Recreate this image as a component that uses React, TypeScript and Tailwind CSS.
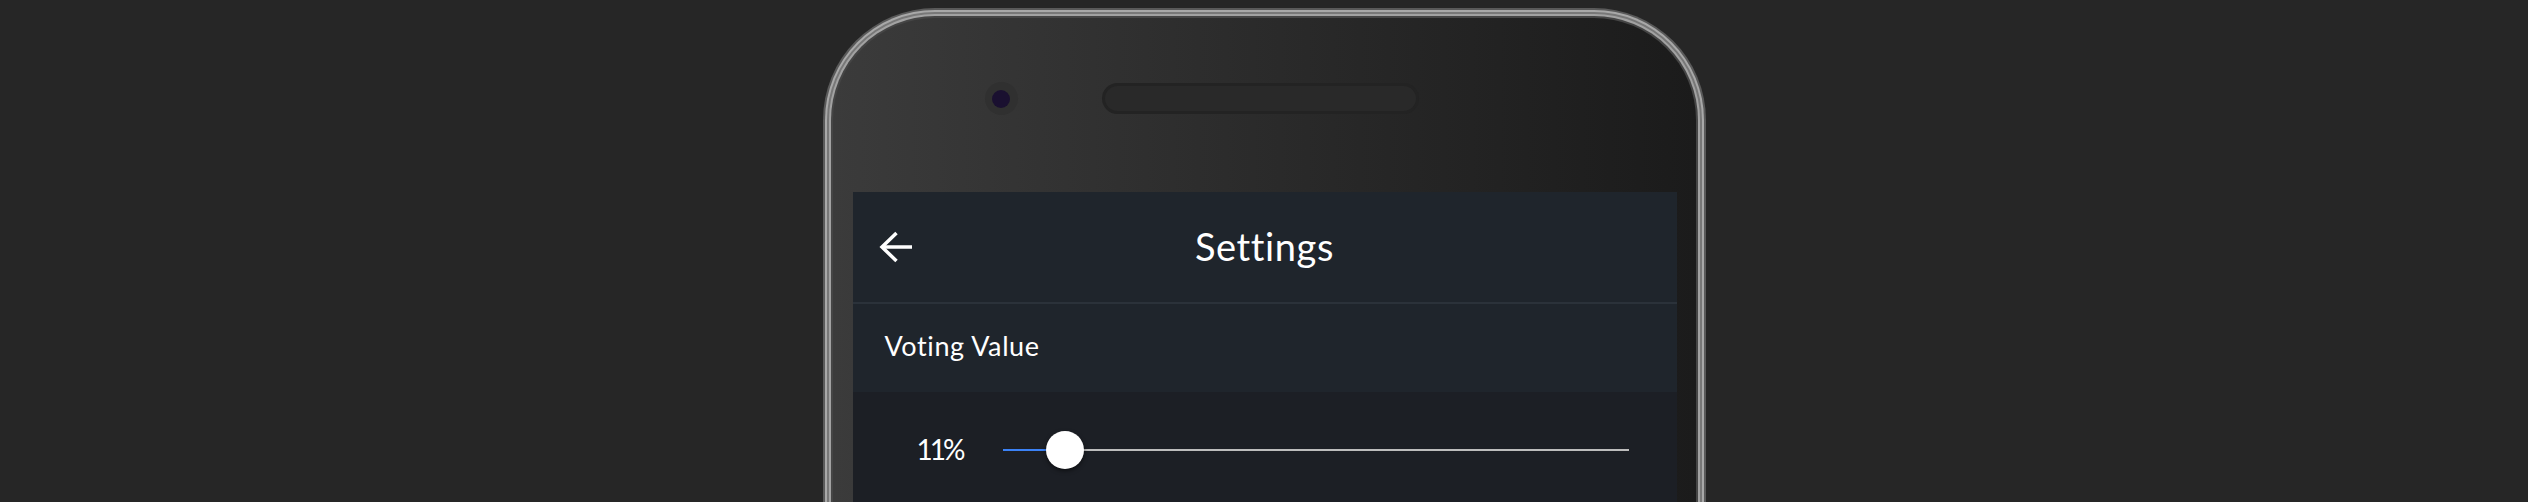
import React from "react";

const font = { fontFamily: "Lato, 'Open Sans', sans-serif" };

export default function App() {
  const pct = 62 / 626;
  return (
    <div className="w-full h-[502px] bg-[#262626] overflow-hidden flex justify-center" style={font}>
      <div className="mt-[8px] w-[883px] h-[800px] shrink-0 rounded-t-[112px] bg-[#5a5a5a] p-[2px]">
        <div className="w-full h-full rounded-t-[110px] bg-[#a8a8a8] p-[2px]">
          <div className="w-full h-full rounded-t-[108px] bg-[#787878] p-[2px]">
            <div className="w-full h-full rounded-t-[106px] bg-[#a2a2a2] p-[2px]">
              <div className="w-full h-full rounded-t-[104px] bg-[#454545] p-[2px]">
                <div className="w-full h-full rounded-t-[102px] bg-gradient-to-r from-[#3b3b3b] to-[#1b1b1b] flex flex-col pl-[20px] pr-[19px]">
                  {/* top bezel */}
                  <div className="h-[174px] shrink-0 flex items-start pt-[64px] pl-[132px]">
                    <div className="w-[33px] h-[33px] rounded-full bg-[#303030] flex items-center justify-center">
                      <div className="w-[18px] h-[18px] rounded-full bg-[#1a1030]" />
                    </div>
                    <div className="ml-[84px] mt-[1px] w-[317px] h-[31px] rounded-full bg-[#232323] p-[3px]">
                      <div className="w-full h-full rounded-full bg-[#292929]" />
                    </div>
                  </div>
                  {/* screen */}
                  <div className="flex-1 flex flex-col bg-[#1c1f25]">
                    <div className="h-[110px] shrink-0 bg-[#1f252c] grid grid-cols-[1fr_auto_1fr] items-center">
                      <div className="pl-[26px] flex items-center">
                        <svg width="34" height="32" viewBox="0 0 34 32" fill="none" stroke="#ffffff" strokeWidth="3.5" strokeLinecap="butt" strokeLinejoin="miter">
                          <path d="M33 16 H4" />
                          <path d="M17.5 2 L3 16 L17.5 30" />
                        </svg>
                      </div>
                      <div className="text-white text-[38px] leading-none tracking-[0.6px] pb-[2px]">Settings</div>
                      <div />
                    </div>
                    <div className="h-[2px] shrink-0 bg-[#2b323a]" />
                    <div className="h-[88px] shrink-0 bg-[#1f252c] flex items-center pl-[32px] pb-[5px]">
                      <span className="text-white text-[27px] leading-none tracking-[0.6px]">Voting Value</span>
                    </div>
                    <div className="h-[116px] shrink-0 flex items-center pl-[64px] pr-[48px]">
                      <span className="text-white text-[28px] leading-none w-[44px] tracking-[-3px] whitespace-nowrap pb-[2px]">11%</span>
                      <div className="ml-[42px] flex-1 relative h-[38px] flex items-center">
                        <div className="flex-1 h-[2px] bg-[#bdbdbd] relative">
                          <div className="absolute left-0 top-0 h-[2px] bg-[#3b82f6]" style={{ width: `${pct * 100}%` }} />
                        </div>
                        <div
                          className="absolute top-0 w-[38px] h-[38px] rounded-full bg-white shadow-[0_2px_4px_rgba(0,0,0,0.5)]"
                          style={{ left: `calc(${pct * 100}% - 19px)` }}
                        />
                      </div>
                    </div>
                  </div>
                </div>
              </div>
            </div>
          </div>
        </div>
      </div>
    </div>
  );
}
